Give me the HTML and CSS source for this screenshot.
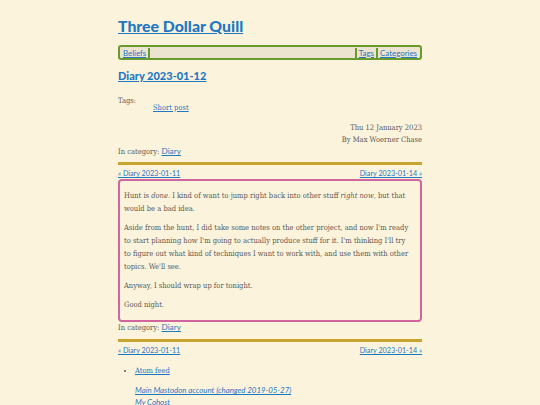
FILE: index.html
```html
<!DOCTYPE html>
<html>
<head>
<meta charset="utf-8">
<link rel="stylesheet" href="styles.css">
</head>
<body>
<div class="page">
  <h1 class="site-title"><a href="#">Three Dollar Quill</a></h1>
  <nav class="topnav">
    <a href="#">Beliefs</a><span class="sep"></span>
    <span class="fill"></span>
    <span class="sep"></span><a href="#">Tags</a><span class="sep"></span><a href="#">Categories</a>
  </nav>
  <h2 class="post-title"><a href="#">Diary 2023-01-12</a></h2>
  <div class="tags">
    <div class="tags-label">Tags:</div>
    <div class="tags-list"><a href="#">Short post</a></div>
  </div>
  <div class="meta">
    <div>Thu 12 January 2023</div>
    <div>By Max Woerner Chase</div>
  </div>
  <div class="category">In category: <a class="sans" href="#">Diary</a></div>
  <hr class="rule">
  <div class="pager"><a href="#">« Diary 2023-01-11</a><a href="#">Diary 2023-01-14 »</a></div>
  <article class="entry">
    <p>Hunt is <em>done</em>. I kind of want to jump right back into other stuff <em>right now</em>, but that would be a bad idea.</p>
    <p>Aside from the hunt, I did take some notes on the other project, and now I'm ready to start planning how I'm going to actually produce stuff for it. I'm thinking I'll try to figure out what kind of techniques I want to work with, and use them with other topics. We'll see.</p>
    <p>Anyway, I should wrap up for tonight.</p>
    <p>Good night.</p>
  </article>
  <div class="category">In category: <a class="sans" href="#">Diary</a></div>
  <hr class="rule rule2">
  <div class="pager"><a href="#">« Diary 2023-01-11</a><a href="#">Diary 2023-01-14 »</a></div>
  <ul class="feeds">
    <li><a href="#">Atom feed</a></li>
  </ul>
  <div class="social">
    <a href="#">Main Mastodon account (changed 2019-05-27)</a>
    <a href="#">My Cohost</a>
  </div>
</div>
</body>
</html>
```

FILE: styles.css
```css
html, body {
  margin: 0;
  padding: 0;
  background: #fcf3dc;
}
body {
  font-family: "DejaVu Serif", serif;
  font-stretch: condensed;
  font-size: 7.5px;
  color: #5a5a55;
}
a {
  color: #1e78c2;
}
.sans {
  font-family: Lato, sans-serif;
  font-stretch: normal;
  font-size: 8.2px;
  line-height: 8px;
}
.page {
  width: 304px;
  margin: 0 auto;
  padding-top: 15px;
}
.site-title {
  margin: 0;
  font-family: Lato, sans-serif;
  font-stretch: normal;
  font-size: 15.8px;
  font-weight: 900;
  line-height: 22px;
}
.topnav {
  margin-top: 8px;
  display: flex;
  align-items: center;
  height: 11px;
  padding: 0 2px;
  border: 2px solid #6b9a2c;
  border-radius: 3px;
  background: #ece4cf;
  font-family: Lato, sans-serif;
  font-stretch: normal;
  font-size: 7.9px;
}
.topnav a {
  padding: 0 1px;
}
.sep {
  width: 2px;
  height: 10px;
  background: #6b9a2c;
  margin: 0 1px;
}
.fill {
  flex: 1;
}
.post-title {
  margin: 8px 0 0;
  font-family: Lato, sans-serif;
  font-stretch: normal;
  font-size: 11px;
  font-weight: 900;
  line-height: 16px;
}
.tags {
  margin-top: 13px;
  line-height: 7px;
}
.tags-list {
  padding-left: 35px;
}
.meta {
  margin-top: 11px;
  text-align: right;
  line-height: 12px;
}
.category {
  line-height: 12px;
}
.rule {
  margin: 4px 0 0;
  border: 0;
  height: 3px;
  background: #c9a42e;
}
.rule2 {
  margin-top: 5px;
}
.pager {
  display: flex;
  justify-content: space-between;
  margin-top: 4px;
  line-height: 10px;
  font-family: Lato, sans-serif;
  font-stretch: normal;
  font-size: 7.2px;
}
.entry {
  border: 2px solid #d1669e;
  border-radius: 4px;
  padding: 8px 8px 9px 4px;
  line-height: 13px;
}
.entry p {
  margin: 0 0 6px;
}
.entry p:last-child {
  margin-bottom: 0;
}
.feeds {
  margin: 9px 0 0;
  padding-left: 17px;
  line-height: 12px;
}
.social {
  margin-top: 7px;
  padding-left: 17px;
  display: flex;
  flex-direction: column;
  align-items: flex-start;
  font-family: Lato, sans-serif;
  font-stretch: normal;
  font-size: 7.85px;
  font-style: italic;
  line-height: 12px;
}
```
